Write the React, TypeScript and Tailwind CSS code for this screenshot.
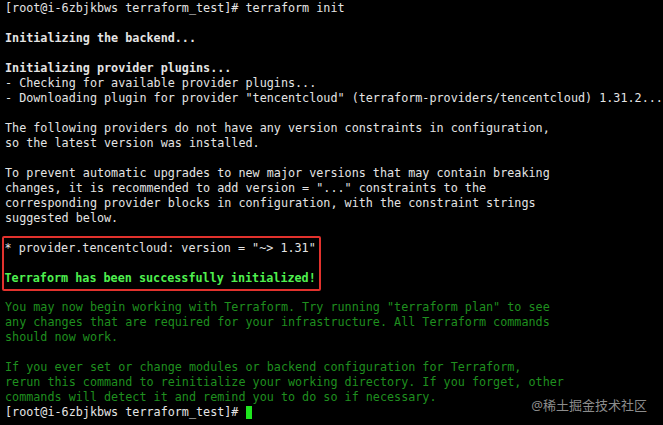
import React from "react";

const prompt = "[root@i-6zbjkbws terraform_test]# ";

const white = [
  "",
  "<b>Initializing the backend...",
  "",
  "<b>Initializing provider plugins...",
  "- Checking for available provider plugins...",
  '- Downloading plugin for provider "tencentcloud" (terraform-providers/tencentcloud) 1.31.2...',
  "",
  "The following providers do not have any version constraints in configuration,",
  "so the latest version was installed.",
  "",
  "To prevent automatic upgrades to new major versions that may contain breaking",
  'changes, it is recommended to add version = "..." constraints to the',
  "corresponding provider blocks in configuration, with the constraint strings",
  "suggested below.",
  "",
];

const dim = [
  "",
  'You may now begin working with Terraform. Try running "terraform plan" to see',
  "any changes that are required for your infrastructure. All Terraform commands",
  "should now work.",
  "",
  "If you ever set or change modules or backend configuration for Terraform,",
  "rerun this command to reinitialize your working directory. If you forget, other",
  "commands will detect it and remind you to do so if necessary.",
];

function Line({ text }: { text: string }) {
  if (text.startsWith("<b>")) {
    return <div className="h-[15px] font-bold">{text.slice(3)}</div>;
  }
  return <div className="h-[15px]">{text || " "}</div>;
}

export default function App() {
  return (
    <div
      className="relative w-[663px] h-[425px] overflow-hidden bg-black pl-[5px] pt-[1px] text-[11.75px] leading-[15px] whitespace-pre text-[#e4e4e4]"
      style={{ fontFamily: '"DejaVu Sans Mono", monospace' }}
    >
      <Line text={prompt + "terraform init"} />
      {white.map((t, i) => (
        <Line key={i} text={t} />
      ))}
      <div className="relative z-10 -ml-[3px] -mt-[5.5px] -mb-[6px] w-[319px] rounded-[2px] border-[2.5px] border-[#e2322d] pl-[0.5px] pt-[3px] pb-[3.5px]">
        <div className="h-[15px]">* provider.tencentcloud: version = "~&gt; 1.31"</div>
        <div className="h-[15px]"> </div>
        <div className="h-[15px] font-bold text-[#4ff04f]">
          Terraform has been successfully initialized!
        </div>
      </div>
      <div className="text-[#1f8f1f]">
        {dim.map((t, i) => (
          <Line key={i} text={t} />
        ))}
      </div>
      <div className="flex h-[15px] items-center">
        <span>{prompt}</span>
        <span className="h-[13px] w-[6px] bg-[#1ee61e]" />
      </div>
      <div
        className="absolute right-[16px] bottom-[12px] text-[13px] leading-[16px] text-[#8c8c8c]"
        style={{ fontFamily: '"Noto Sans", "Noto Sans CJK SC", sans-serif' }}
      >
        @稀土掘金技术社区
      </div>
    </div>
  );
}
